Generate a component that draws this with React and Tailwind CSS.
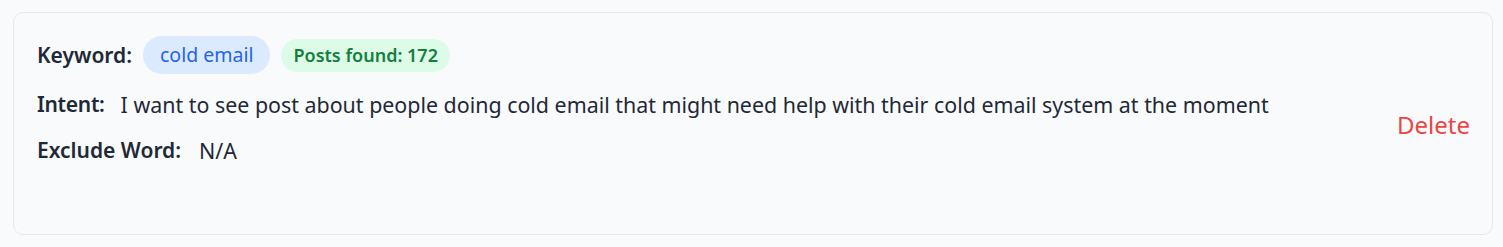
export default function App() {
  const font = { fontFamily: '"Noto Sans", "Open Sans", sans-serif' };
  return (
    <div className="w-[1503px] h-[247px] bg-[#f9fafb] pt-[12px] pl-[13px]" style={font}>
      <div className="w-[1480px] h-[223px] rounded-[10px] border border-[#e5e7eb] bg-[#f9fafb] flex items-center justify-between pl-[23px] pr-[22px]">
        <div className="flex flex-col gap-[16px] self-start pt-[23px]">
          <div className="flex items-center h-[38px]">
            <span className="text-[21px] font-semibold text-[#1f2937] leading-none">Keyword:</span>
            <span className="ml-[11px] h-[38px] flex items-center px-[17px] rounded-full bg-[#dbeafe] text-[#2563eb] text-[19.5px]">cold email</span>
            <span className="ml-[11px] h-[33px] flex items-center px-[12px] rounded-full bg-[#dcfce7] text-[#15803d] text-[18px] font-semibold">Posts found: 172</span>
          </div>
          <div className="flex items-center h-[30px] text-[21px] text-[#1f2937] whitespace-nowrap">
            <span className="font-semibold tracking-[-0.3px]">Intent:</span>
            <span className="ml-[16px] text-[21.4px]">I want to see post about people doing cold email that might need help with their cold email system at the moment</span>
          </div>
          <div className="flex items-center h-[30px] text-[21px] text-[#1f2937]">
            <span className="font-semibold">Exclude Word:</span>
            <span className="ml-[18px] text-[21.4px]">N/A</span>
          </div>
        </div>
        <button className="text-[24px] text-[#ef4444] mt-[2px]">Delete</button>
      </div>
    </div>
  );
}
